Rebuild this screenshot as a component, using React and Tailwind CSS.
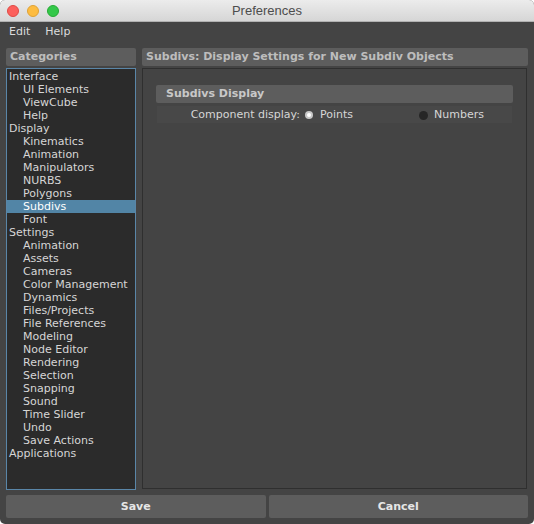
import React from 'react';

const categories = [
    { label: 'Interface', level: 0 },
    { label: 'UI Elements', level: 1 },
    { label: 'ViewCube', level: 1 },
    { label: 'Help', level: 1 },
    { label: 'Display', level: 0 },
    { label: 'Kinematics', level: 1 },
    { label: 'Animation', level: 1 },
    { label: 'Manipulators', level: 1 },
    { label: 'NURBS', level: 1 },
    { label: 'Polygons', level: 1 },
    { label: 'Subdivs', level: 1, selected: true },
    { label: 'Font', level: 1 },
    { label: 'Settings', level: 0 },
    { label: 'Animation', level: 1 },
    { label: 'Assets', level: 1 },
    { label: 'Cameras', level: 1 },
    { label: 'Color Management', level: 1 },
    { label: 'Dynamics', level: 1 },
    { label: 'Files/Projects', level: 1 },
    { label: 'File References', level: 1 },
    { label: 'Modeling', level: 1 },
    { label: 'Node Editor', level: 1 },
    { label: 'Rendering', level: 1 },
    { label: 'Selection', level: 1 },
    { label: 'Snapping', level: 1 },
    { label: 'Sound', level: 1 },
    { label: 'Time Slider', level: 1 },
    { label: 'Undo', level: 1 },
    { label: 'Save Actions', level: 1 },
    { label: 'Applications', level: 0 },
];

export default function App() {
    return (
        <div className="w-[534px] h-[524px] bg-white font-['DejaVu_Sans',sans-serif]">
            <div className="w-full h-full flex flex-col bg-[#444444] rounded-[5px] overflow-hidden">
                {/* Title bar */}
                <div className="h-[22px] shrink-0 relative flex items-center justify-center bg-gradient-to-b from-[#ececec] to-[#d6d6d6] border-b border-[#b1b1b1]">
                    <div className="absolute left-[7px] top-[5px] flex gap-[8px]">
                        <span className="w-[12px] h-[12px] rounded-full bg-[#fc605c] border border-[#de4a45]" />
                        <span className="w-[12px] h-[12px] rounded-full bg-[#fdbc40] border border-[#dea236]" />
                        <span className="w-[12px] h-[12px] rounded-full bg-[#34c84a] border border-[#27aa35]" />
                    </div>
                    <span className="text-[13px] text-[#4d4d4d] font-['Liberation_Sans',sans-serif]">Preferences</span>
                </div>

                {/* Menu */}
                <div className="h-[20px] shrink-0 flex items-center gap-[15px] px-[9px] text-[11px] text-[#dcdcdc]">
                    <span>Edit</span>
                    <span>Help</span>
                </div>

                {/* Main */}
                <div className="flex-1 flex gap-[6px] px-[6px] pt-[6px] min-h-0">
                    <div className="w-[130px] shrink-0 flex flex-col gap-[2px]">
                        <div className="h-[18px] shrink-0 bg-[#5d5d5d] rounded-[2px] px-[4px] flex items-center text-[11px] font-bold text-[#bdbdbd]">
                            Categories
                        </div>
                        <div className="flex-1 bg-[#2b2b2b] border border-[#5a86a8] pt-[1px] text-[11px] text-[#d6d6d6]">
                            {categories.map((c, i) => (
                                <div
                                    key={i}
                                    className={`h-[13px] leading-[13px] whitespace-nowrap ${c.level ? 'pl-[16px]' : 'pl-[2px]'} ${c.selected ? 'bg-[#5285a6] text-white' : ''}`}
                                >
                                    {c.label}
                                </div>
                            ))}
                        </div>
                    </div>

                    <div className="flex-1 min-w-0 flex flex-col gap-[2px]">
                        <div className="h-[18px] shrink-0 bg-[#5d5d5d] rounded-[2px] px-[4px] flex items-center text-[11px] font-bold text-[#bdbdbd] whitespace-nowrap">
                            Subdivs: Display Settings for New Subdiv Objects
                        </div>
                        <div className="flex-1 mr-[1px] mb-[1px] border border-[#2f2f2f] px-[13px] pt-[16px]">
                            <div className="h-[18px] bg-[#5d5d5d] rounded-[2px] px-[10px] flex items-center text-[11px] font-bold text-[#c8c8c8]">
                                Subdivs Display
                            </div>
                            <div className="mt-[3px] mx-[1px] h-[17px] pt-[1px] bg-[#484848] flex items-center text-[11px] text-[#d6d6d6]">
                                <span className="w-[143px] text-right">Component display:</span>
                                <span className="ml-[5px] w-[8px] h-[8px] rounded-full bg-[#c8c8c8] flex items-center justify-center">
                                    <span className="w-[4px] h-[4px] rounded-full bg-white" />
                                </span>
                                <span className="ml-[7px]">Points</span>
                                <span className="ml-[66px] w-[9px] h-[9px] rounded-full bg-[#262626]" />
                                <span className="ml-[6px]">Numbers</span>
                            </div>
                        </div>
                    </div>
                </div>

                {/* Buttons */}
                <div className="h-[23px] shrink-0 mt-[5px] mb-[6px] mx-[6px] flex gap-[3px] text-[11px] font-bold text-[#e6e6e6]">
                    <button className="flex-1 bg-[#5d5d5d] rounded-[2px] pt-[2px]">Save</button>
                    <button className="flex-1 bg-[#5d5d5d] rounded-[2px] pt-[2px]">Cancel</button>
                </div>
            </div>
        </div>
    );
}
